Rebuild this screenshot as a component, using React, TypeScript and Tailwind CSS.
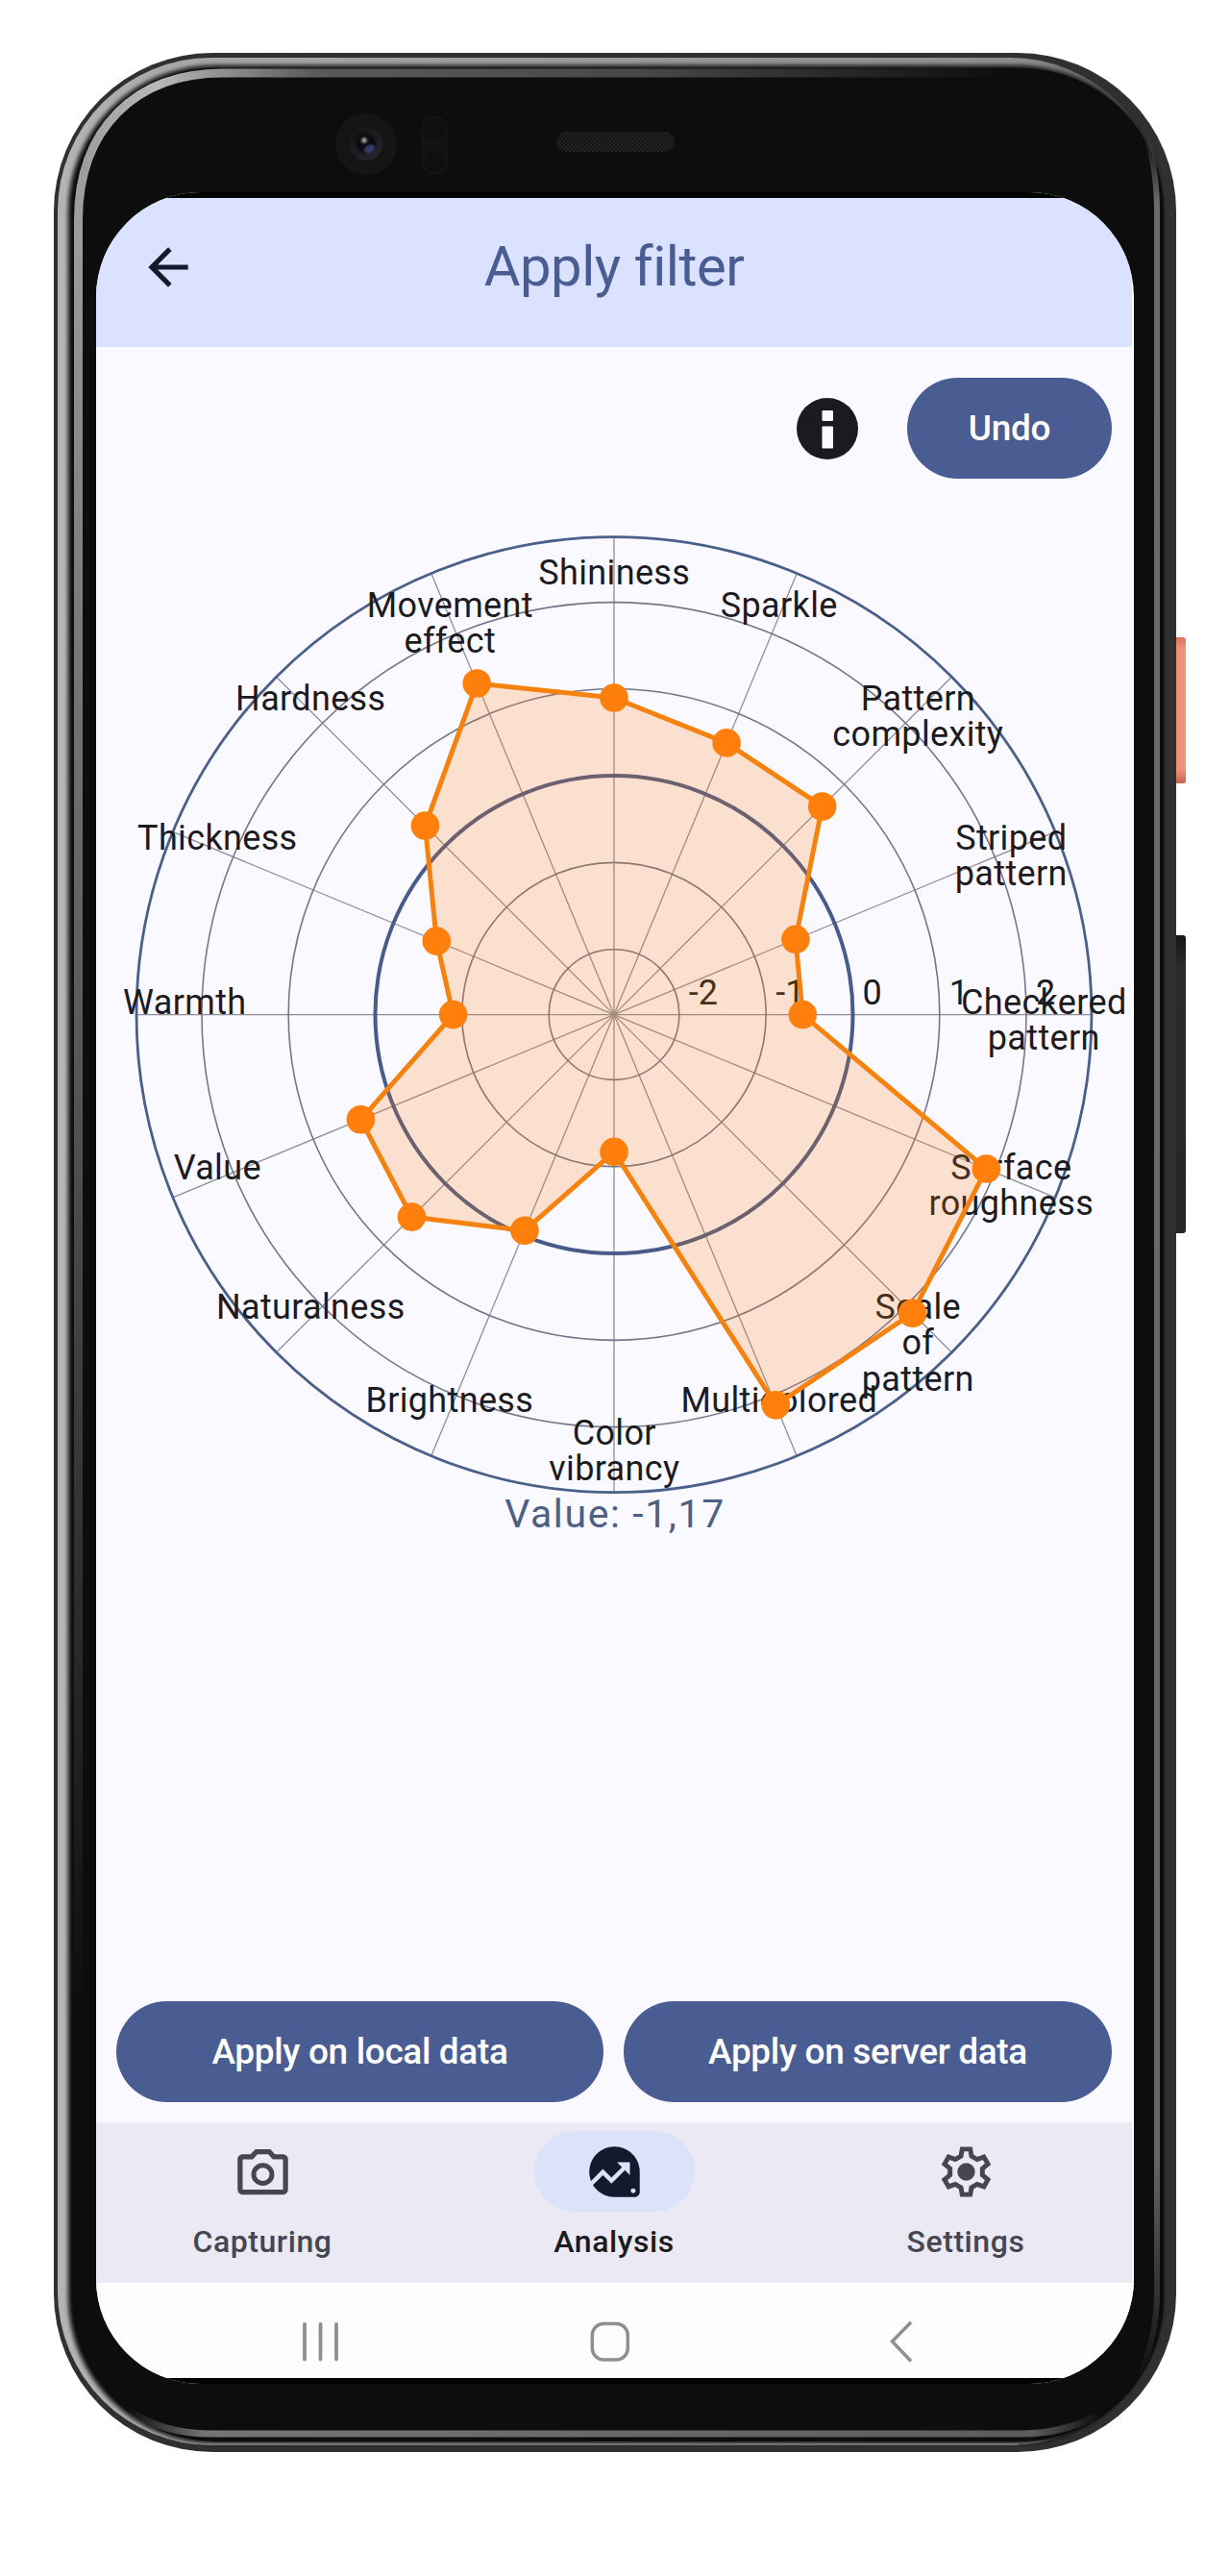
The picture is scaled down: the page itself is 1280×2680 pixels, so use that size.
import React from "react";

const FONT = 'Roboto, "Liberation Sans", sans-serif';

/* ---------- Phone body ---------- */

function Bezel() {
  return (
    <svg className="absolute inset-0" width="1168" height="2496" viewBox="56 55 1168 2496" fill="none">
      <defs>
        <linearGradient id="rim" x1="60" y1="0" x2="1211" y2="0" gradientUnits="userSpaceOnUse">
          <stop offset="0" stopColor="#b4b4b4" />
          <stop offset="0.12" stopColor="#a6a6a6" />
          <stop offset="0.88" stopColor="#8c8c8c" />
          <stop offset="1" stopColor="#262626" />
        </linearGradient>
        <linearGradient id="topBand" x1="86" y1="0" x2="1050" y2="0" gradientUnits="userSpaceOnUse">
          <stop offset="0" stopColor="#9d9d9d" />
          <stop offset="0.08" stopColor="#b8b8b8" />
          <stop offset="0.25" stopColor="#5a5a5a" />
          <stop offset="0.6" stopColor="#484848" />
          <stop offset="1" stopColor="#484848" stopOpacity="0" />
        </linearGradient>
        <linearGradient id="leftBand" x1="0" y1="228" x2="0" y2="2100" gradientUnits="userSpaceOnUse">
          <stop offset="0" stopColor="#9d9d9d" />
          <stop offset="0.15" stopColor="#858585" />
          <stop offset="0.6" stopColor="#444" />
          <stop offset="1" stopColor="#444" stopOpacity="0" />
        </linearGradient>
        <linearGradient id="rightBand" x1="0" y1="140" x2="0" y2="2480" gradientUnits="userSpaceOnUse">
          <stop offset="0" stopColor="#6a6a6a" stopOpacity="0" />
          <stop offset="0.03" stopColor="#6a6a6a" />
          <stop offset="0.9" stopColor="#666" />
          <stop offset="1" stopColor="#666" stopOpacity="0" />
        </linearGradient>
        <linearGradient id="bottomBand" x1="132" y1="0" x2="1145" y2="0" gradientUnits="userSpaceOnUse">
          <stop offset="0" stopColor="#757575" stopOpacity="0" />
          <stop offset="0.08" stopColor="#757575" />
          <stop offset="0.93" stopColor="#5c5c5c" />
          <stop offset="1" stopColor="#5c5c5c" stopOpacity="0" />
        </linearGradient>
        <radialGradient id="iris" cx="0.4" cy="0.35" r="0.8">
          <stop offset="0" stopColor="#0c0c0e" />
          <stop offset="1" stopColor="#2b2b30" />
        </radialGradient>
        <pattern id="mesh" width="4" height="4" patternUnits="userSpaceOnUse">
          <rect width="4" height="4" fill="#141414" />
          <rect width="2" height="2" fill="#222" />
          <rect x="2" y="2" width="2" height="2" fill="#222" />
        </pattern>
        <filter id="soft" x="-5%" y="-5%" width="110%" height="110%">
          <feGaussianBlur stdDeviation="2" />
        </filter>
        <filter id="dot" x="-50%" y="-50%" width="200%" height="200%">
          <feGaussianBlur stdDeviation="1" />
        </filter>
      </defs>
      <rect x="56" y="55" width="1168" height="2496" rx="165" fill="#303030" />
      <rect x="60" y="60" width="1151" height="2484" rx="160" fill="url(#rim)" />
      <rect x="71" y="68" width="1139" height="2474" rx="152" fill="#0a0a0b" filter="url(#soft)" />
      <rect x="77" y="71" width="1134" height="2469" rx="148" fill="#0d0d0e" />
      <path d="M81.5 229 C81.5 134 141 76 232 76 H1050" stroke="url(#topBand)" strokeWidth="9" />
      <path d="M81.5 228.5 V2100" stroke="url(#leftBand)" strokeWidth="9" />
      <path d="M1192 140 Q1204 175 1204 220 V2385 Q1204 2430 1185 2475" stroke="url(#rightBand)" strokeWidth="6" />
      <path d="M135 2509 Q172 2532 218 2532 H1065 Q1105 2532 1145 2512" stroke="url(#bottomBand)" strokeWidth="7" />
      <path d="M215 2543 H1060" stroke="#777" strokeWidth="1.5" />

      <circle cx="381" cy="150" r="32" fill="#151515" />
      <circle cx="381" cy="150" r="17" fill="url(#iris)" />
      <circle cx="381" cy="150" r="10" fill="#0b0b10" />
      <ellipse cx="384.5" cy="155" rx="6" ry="4" fill="#34416e" filter="url(#dot)" transform="rotate(-30 384.5 155)" />
      <circle cx="379" cy="146" r="2.8" fill="#a0a0a0" filter="url(#dot)" />
      <rect x="438" y="120" width="28" height="62" rx="14" fill="#131313" />
      <circle cx="452" cy="134" r="11" fill="#0f0f0f" />
      <circle cx="452" cy="168" r="11" fill="#0f0f0f" />
      <rect x="579" y="137" width="123" height="21" rx="10" fill="url(#mesh)" />
    </svg>
  );
}

/* ---------- Radar chart ---------- */

const CX = 639;
const CY = 1055.6;
const R = 497;

type Axis = { lines: string[]; x: number; y: number; r: number };

const AXES: Axis[] = [
  { lines: ["Shininess"], x: 639, y: 608, r: 329.6 },
  { lines: ["Sparkle"], x: 810.5, y: 642, r: 306 },
  { lines: ["Pattern", "complexity"], x: 955, y: 738.7, r: 306.4 },
  { lines: ["Striped", "pattern"], x: 1052, y: 883.8, r: 204.5 },
  { lines: ["Checkered", "pattern"], x: 1086, y: 1055, r: 196.3 },
  { lines: ["Surface", "roughness"], x: 1052, y: 1227, r: 419.3 },
  { lines: ["Scale", "of", "pattern"], x: 955, y: 1372, r: 439.3 },
  { lines: ["Multicolored"], x: 810.5, y: 1469, r: 439.7 },
  { lines: ["Color", "vibrancy"], x: 639, y: 1503, r: 142.8 },
  { lines: ["Brightness"], x: 467.5, y: 1469, r: 243.2 },
  { lines: ["Naturalness"], x: 323, y: 1372, r: 297.7 },
  { lines: ["Value"], x: 226, y: 1227, r: 285.3 },
  { lines: ["Warmth"], x: 192, y: 1055, r: 167.4 },
  { lines: ["Thickness"], x: 226, y: 883.8, r: 199.9 },
  { lines: ["Hardness"], x: 323, y: 738.7, r: 278 },
  { lines: ["Movement", "effect"], x: 468, y: 642, r: 373 },
];

const RINGS = [
  { label: "-2", r: 67.8, w: 1.6 },
  { label: "-1", r: 158.2, w: 1.6 },
  { label: "0", r: 248.5, w: 4 },
  { label: "1", r: 338.8, w: 1.6 },
  { label: "2", r: 429, w: 1.6 },
];

const at = (i: number, r: number) => {
  const a = (i * Math.PI) / 8;
  return [CX + r * Math.sin(a), CY - r * Math.cos(a)] as const;
};

function RadarChart() {
  const points = AXES.map((a, i) => at(i, a.r));
  return (
    <svg className="block" width="1080" height="1053" viewBox="100 498 1080 1053" fill="none" overflow="visible">
      {AXES.map((_, i) => {
        const [x, y] = at(i, R);
        return <line key={i} x1={CX} y1={CY} x2={x} y2={y} stroke="#8e8e98" strokeWidth="1.3" />;
      })}
      {RINGS.map((g) => (
        <circle key={g.label} cx={CX} cy={CY} r={g.r} stroke={g.w > 2 ? "#485b8a" : "#74768a"} strokeWidth={g.w} />
      ))}
      <circle cx={CX} cy={CY} r={R} stroke="#4a5f89" strokeWidth="2.8" />
      <g fontFamily={FONT} fontSize="36" fill="#1b1b21">
        {RINGS.map((g) => (
          <text key={g.label} x={CX + g.r + 10} y={1045}>
            {g.label}
          </text>
        ))}
        {AXES.map((a) =>
          a.lines.map((line, j) => (
            <text key={a.lines[0] + line} x={a.x + 0.3} y={a.y + j * 37.3} textAnchor="middle" letterSpacing="0.35">
              {line}
            </text>
          )),
        )}
      </g>
      <polygon
        points={points.map((p) => p.join(",")).join(" ")}
        fill="#ff7f0f"
        fillOpacity="0.2"
        stroke="#f5820f"
        strokeWidth="5"
        strokeLinejoin="round"
      />
      {points.map(([x, y], i) => (
        <circle key={i} cx={x} cy={y} r="14.8" fill="#ff7f0c" />
      ))}
    </svg>
  );
}

/* ---------- Icons ---------- */

function BackArrow() {
  return (
    <svg width="62" height="62" viewBox="0 0 24 24" fill="#141a2c">
      <path d="M20 11H7.83l5.59-5.59L12 4l-8 8 8 8 1.41-1.41L7.83 13H20v-2z" />
    </svg>
  );
}

function InfoIcon() {
  return (
    <svg width="64" height="64" viewBox="0 0 64 64">
      <circle cx="32" cy="32" r="32" fill="#1a1b21" />
      <rect x="26.5" y="13" width="11.5" height="11" rx="1" fill="#faf9ff" />
      <rect x="26.5" y="29.5" width="11.5" height="23" rx="1" fill="#faf9ff" />
    </svg>
  );
}

function CameraIcon() {
  return (
    <svg width="63" height="63" viewBox="0 0 24 24" fill="#45464f">
      <path d="M14.12 5l1.83 2H20v12H4V7h4.05l1.83-2h4.24M15 3H9L7.17 5H4c-1.1 0-2 .9-2 2v12c0 1.1.9 2 2 2h16c1.1 0 2-.9 2-2V7c0-1.1-.9-2-2-2h-3.17L15 3z" />
      <circle cx="12" cy="13" r="3.6" fill="none" stroke="#45464f" strokeWidth="1.9" />
    </svg>
  );
}

function AnalysisIcon() {
  return (
    <svg width="63" height="63" viewBox="0 0 24 24">
      <path d="M12 2C6.48 2 2 6.48 2 12s4.48 10 10 10h8c1.1 0 2-.9 2-2v-8c0-5.52-4.48-10-10-10z" fill="#131a2e" />
      <path
        transform="translate(-0.6 3.1) scale(0.85)"
        d="m16 6 2.29 2.29-4.88 4.88-4-4L2 16.59 3.41 18l6-6 4 4 6.3-6.29L22 12V6h-6z"
        fill="#dbe2f9"
      />
      <circle cx="19.4" cy="19.5" r="0.95" fill="#dbe2f9" />
    </svg>
  );
}

const TOOTH = [
  [-2.1, -6.2],
  [-1.6, -9],
  [1.6, -9],
  [2.1, -6.2],
];
const GEAR = [0, 1, 2, 3, 4, 5]
  .flatMap((k) => {
    const c = Math.cos((k * Math.PI) / 3);
    const s = Math.sin((k * Math.PI) / 3);
    return TOOTH.map(([x, y]) => `${12 + x * c - y * s},${12 + x * s + y * c}`);
  })
  .join(" ");

function GearIcon() {
  return (
    <svg width="63" height="63" viewBox="0 0 24 24" fill="none">
      <polygon points={GEAR} stroke="#45464f" strokeWidth="1.9" />
      <circle cx="12" cy="12" r="3.5" fill="#45464f" />
    </svg>
  );
}

/* ---------- Screen parts ---------- */

function PillButton({ children, className }: { children: React.ReactNode; className: string }) {
  return (
    <button
      className={`flex h-[105px] items-center justify-center rounded-full bg-[#495d92] font-medium text-white ${className}`}
    >
      {children}
    </button>
  );
}

function Tab({ label, icon, active }: { label: string; icon: React.ReactNode; active?: boolean }) {
  return (
    <div className="flex w-[366px] shrink-0 flex-col items-center pt-[9px]">
      <div
        className={
          active
            ? "flex h-[84px] w-[167px] items-center justify-center rounded-full bg-[#dbe2f9]"
            : "flex h-[84px] w-[167px] items-center justify-center"
        }
      >
        {icon}
      </div>
      <span
        className={
          active
            ? "mt-[12px] text-[32px] leading-[38px] font-medium tracking-[0.55px] text-[#1a1b21]"
            : "mt-[12px] text-[32px] leading-[38px] font-medium tracking-[0.55px] text-[#45464f]"
        }
      >
        {label}
      </span>
    </div>
  );
}

export default function App() {
  return (
    <div className="h-[2680px] w-[1280px] overflow-hidden bg-white pt-[55px] pl-14" style={{ fontFamily: FONT }}>
      <div className="relative h-[2496px] w-[1168px] pt-[145px] pl-11">
        <Bezel />
        <div className="absolute top-[608px] left-[1168px] h-[152px] w-[10px] overflow-hidden rounded-r-[3px] bg-linear-to-b from-[#dd735b] from-0% via-[#f0927a] via-8% to-[#f0927a]">
          <div className="mt-[138px] h-[14px] w-full bg-linear-to-b from-[#f0927a] to-[#c8604a]" />
        </div>
        <div className="absolute top-[918px] left-[1168px] h-[310px] w-[10px] rounded-r-[3px] bg-linear-to-b from-[#161616] via-[#2a2a2a] via-10% to-[#262626]" />

        <div className="relative flex h-[2280px] w-[1080px] flex-col overflow-hidden rounded-[109px] bg-white">
          <div className="h-[6px] shrink-0 bg-black" />
          <header className="flex h-[155px] w-[1078px] shrink-0 bg-[#dae2ff] pt-[41px] pl-[44px]">
            <BackArrow />
            <h1 className="-mt-[9px] ml-[84px] w-[698px] text-center text-[58px] leading-[78px] tracking-[-0.5px] text-[#495d92]">
              Apply filter
            </h1>
          </header>

          <main className="flex w-[1078px] flex-1 flex-col bg-[#faf9ff]">
            <div className="flex items-center justify-end gap-[51px] pt-[32px] pr-[21px]">
              <InfoIcon />
              <PillButton className="w-[213px] text-[37px] tracking-[-0.3px]">Undo</PillButton>
            </div>
            <RadarChart />
            <p className="w-[1080px] text-center text-[41px] leading-[48px] tracking-[1.6px] text-[#4b6184]">Value: -1,17</p>
            <div className="mt-auto flex justify-between pr-[21px] pb-[21px] pl-[21px]">
              <PillButton className="w-[507px] text-[37px] tracking-[-0.35px]">Apply on local data</PillButton>
              <PillButton className="w-[508px] text-[37px] tracking-[-0.35px]">Apply on server data</PillButton>
            </div>
          </main>

          <nav className="flex h-[167px] w-[1078px] shrink-0 justify-center bg-[#ebe9f4]">
            <Tab label="Capturing" icon={<CameraIcon />} />
            <Tab label="Analysis" icon={<AnalysisIcon />} active />
            <Tab label="Settings" icon={<GearIcon />} />
          </nav>

          <div className="h-[99px] shrink-0 bg-[#fdfdfd]">
            <svg width="1080" height="99" viewBox="100 2375 1080 99" fill="none" stroke="#8f8f8f">
              <path d="M317 2418V2454.500M333.500 2418V2454.500M350 2418V2454.500" strokeWidth="3.800" strokeLinecap="round" />
              <rect x="616.300" y="2417.500" width="37" height="37.500" rx="12" strokeWidth="3.500" />
              <path d="M948 2416L928.500 2436L948 2456.500" strokeWidth="3.500" />
            </svg>
          </div>
          <div className="h-[6px] shrink-0 bg-black" />
        </div>
      </div>
    </div>
  );
}
